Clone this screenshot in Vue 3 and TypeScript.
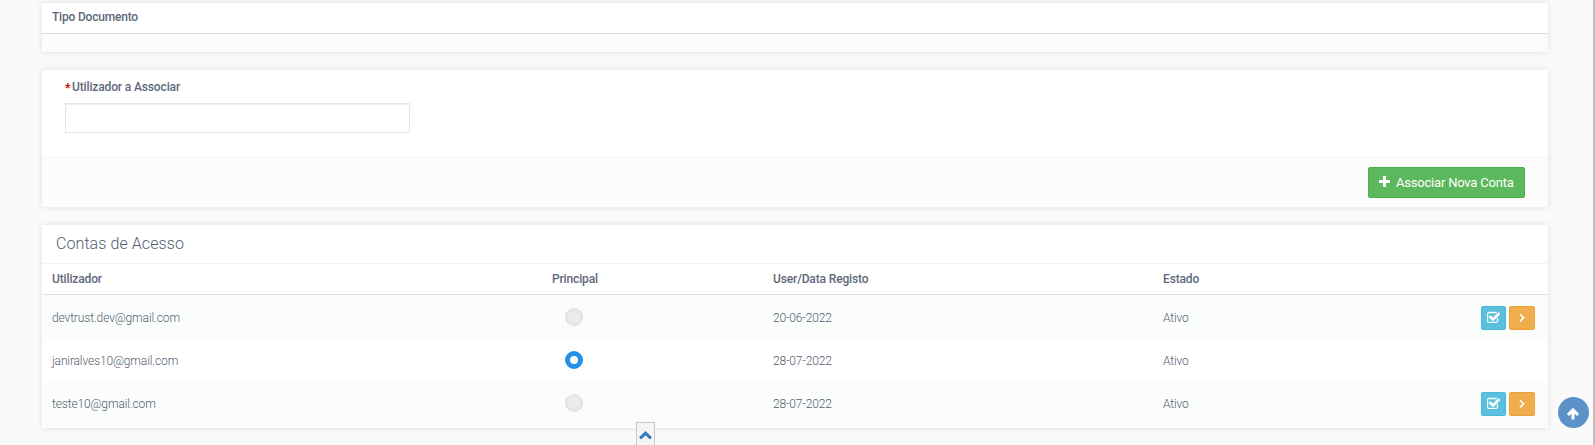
<script setup lang="ts">
interface Account {
  user: string
  date: string
  state: string
  main: boolean
}

const accounts: Account[] = [
  { user: 'devtrust.dev@gmail.com', date: '20-06-2022', state: 'Ativo', main: false },
  { user: 'janiralves10@gmail.com', date: '28-07-2022', state: 'Ativo', main: true },
  { user: 'teste10@gmail.com', date: '28-07-2022', state: 'Ativo', main: false },
]
</script>

<template>
  <div class="page">
    <section class="panel documents">
      <div class="documents-head">Tipo Documento</div>
      <div class="documents-body"></div>
    </section>

    <section class="panel associate">
      <div class="form">
        <label class="label" for="user"><span class="required">*</span>Utilizador a Associar</label>
        <input id="user" class="field" type="text" />
      </div>
      <footer class="form-footer">
        <button class="add" type="button">
          <svg class="add-icon" viewBox="0 0 1408 1408" width="11" height="11">
            <path fill="currentColor" d="M1408 608v192q0 40-28 68t-68 28H896v416q0 40-28 68t-68 28H608q-40 0-68-28t-28-68V896H96q-40 0-68-28T0 800V608q0-40 28-68t68-28h416V96q0-40 28-68t68-28h192q40 0 68 28t28 68v416h416q40 0 68 28t28 68z" />
          </svg>
          <span>Associar Nova Conta</span>
        </button>
      </footer>
    </section>

    <section class="panel accounts">
      <h2 class="title">Contas de Acesso</h2>
      <div class="row head">
        <div>Utilizador</div>
        <div>Principal</div>
        <div>User/Data Registo</div>
        <div>Estado</div>
        <div></div>
      </div>
      <div v-for="account in accounts" :key="account.user" class="row item">
        <div>{{ account.user }}</div>
        <div><span class="radio" :class="{ checked: account.main }"></span></div>
        <div>{{ account.date }}</div>
        <div>{{ account.state }}</div>
        <div class="actions">
          <template v-if="!account.main">
            <button class="action check" type="button">
              <svg viewBox="0 0 1664 1536" width="13" height="12">
                <path fill="currentColor" stroke="currentColor" stroke-width="50" d="M1408 930v318q0 119-84.500 203.500T1120 1536H288q-119 0-203.500-84.500T0 1248V416q0-119 84.500-203.500T288 128h832q63 0 117 25 15 7 18 23 3 17-9 29l-49 49q-10 10-23 10-3 0-9-2-23-6-45-6H288q-66 0-113 47t-47 113v832q0 66 47 113t113 47h832q66 0 113-47t47-113V994q0-13 9-22l64-64q10-10 23-10 6 0 12 3 20 8 20 29zm231-489l-814 814q-24 24-57 24t-57-24L281 825q-24-24-24-57t24-57l110-110q24-24 57-24t57 24l263 263 647-647q24-24 57-24t57 24l110 110q24 24 24 57t-24 57z" />
              </svg>
            </button>
            <button class="action next" type="button">
              <svg viewBox="0 0 6 10" width="6" height="10">
                <path d="M1 1.200 4.600 4.800 1 8.400" fill="none" stroke="currentColor" stroke-width="1.600" />
              </svg>
            </button>
          </template>
        </div>
      </div>
    </section>

    <button class="drawer" type="button">
      <svg viewBox="0 0 13 9" width="13" height="9">
        <path d="M1.100 7.400 6.500 2.200 11.900 7.400" fill="none" stroke="currentColor" stroke-width="3" />
      </svg>
    </button>
    <button class="top" type="button">
      <svg viewBox="0 0 12 12" width="12" height="12">
        <path d="M6 11.600V2M1 6.900 6 1.900l5 5" fill="none" stroke="currentColor" stroke-width="3" />
      </svg>
    </button>
    <div class="edge"></div>
  </div>
</template>

<style>
body {
  margin: 0;
  overflow: hidden;
}
</style>

<style scoped>
.page {
  box-sizing: border-box;
  position: relative;
  display: flex;
  flex-direction: column;
  gap: 18px;
  height: 445px;
  padding: 3px 47px 0 42px;
  overflow: hidden;
  background: #fafafa;
  color: #535d70;
  font: 12px/17px Roboto, sans-serif;
  letter-spacing: -0.14px;
}
.panel {
  box-sizing: border-box;
  flex: none;
  background: #fff;
  box-shadow: 0 0 6px rgba(0, 0, 0, 0.12);
}
.documents {
  height: 49px;
}
.documents-head {
  box-sizing: border-box;
  height: 31px;
  padding: 6px 10px 0;
  border-bottom: 1px solid #dcdedd;
  color: #5e687a;
  font-weight: 500;
  letter-spacing: -0.2px;
}
.documents-body {
  height: 18px;
  background: #fbfdfc;
}
.associate {
  height: 137px;
}
.form {
  box-sizing: border-box;
  height: 87px;
  padding: 9px 23px 0;
}
.label {
  display: flex;
  height: 17px;
  color: #5e687a;
  font-weight: 500;
  letter-spacing: -0.14px;
}
.required {
  width: 7px;
  color: #c00;
  font-weight: 700;
  transform: translateY(1px);
}
.field {
  display: block;
  box-sizing: border-box;
  width: 345px;
  height: 30px;
  margin: 7px 0 0;
  padding: 0 8px;
  border: 1px solid #e5e6e6;
  border-radius: 0;
  outline: 0;
  background: #fff;
  box-shadow: inset 0 1px 1px rgba(0, 0, 0, 0.075);
}
.form-footer {
  box-sizing: border-box;
  display: flex;
  justify-content: flex-end;
  height: 50px;
  padding: 9px 23px;
  border-top: 1px solid #f5f5f5;
  background: #fcfcfc;
}
.add {
  box-sizing: border-box;
  display: flex;
  align-items: center;
  width: 157px;
  height: 31px;
  padding: 0 0 0 10px;
  gap: 6px;
  border: 1px solid #4cae4c;
  border-radius: 2px;
  background: #5cb85c;
  color: #fff;
  font: 13px/18px Roboto, sans-serif;
  letter-spacing: -0.2px;
  white-space: nowrap;
}
.add-icon {
  margin-bottom: 2px;
}
.accounts {
  height: 203px;
}
.title {
  box-sizing: border-box;
  height: 39px;
  margin: 0;
  padding: 8px 14px;
  border-bottom: 1px solid #f3f3f3;
  font-size: 16px;
  font-weight: 300;
  line-height: 21px;
  letter-spacing: 0.08px;
}
.row {
  box-sizing: border-box;
  display: grid;
  grid-template-columns: 500px 221px 390px 260px 1fr;
  margin: 0 1px;
  padding-left: 9px;
}
.head {
  height: 31px;
  padding-top: 7px;
  border-bottom: 1px solid #dcdcde;
  color: #5e687a;
  font-weight: 500;
}
.item {
  align-items: center;
  height: 46px;
  font-weight: 300;
}
.item:nth-child(even) {
  height: 41px;
  padding-bottom: 1px;
}
.item:nth-child(odd) {
  background: #fbfdfc;
}
.item:last-child {
  height: 45px;
  padding-bottom: 1px;
}
.radio {
  display: block;
  box-sizing: border-box;
  width: 18px;
  height: 18px;
  margin: 0 0 2px 13px;
  border-radius: 50%;
  background: #ececec;
  box-shadow: inset 0 0 4px rgba(0, 0, 0, 0.1);
}
.radio.checked {
  border: 5px solid #2490ec;
  background: #fff;
  box-shadow: none;
}
.actions {
  display: flex;
  justify-content: flex-end;
  gap: 3px;
  padding-right: 12px;
}
.action {
  box-sizing: border-box;
  display: flex;
  align-items: center;
  justify-content: center;
  width: 25px;
  height: 24px;
  padding: 0 0 2px;
  border: 1px solid #46b8da;
  border-radius: 2px;
  background: #5bc0de;
  color: #fff;
}
.next {
  width: 26px;
  padding: 0;
  border-color: #eea236;
  background: #f0ad4e;
}
.drawer {
  position: absolute;
  box-sizing: border-box;
  left: 636px;
  top: 422px;
  display: flex;
  justify-content: center;
  width: 19px;
  height: 30px;
  padding: 8px 0 0;
  border: 1px solid #c8c8c8;
  background: #f5f5f5;
  color: #337ab7;
}
.top {
  position: absolute;
  left: 1558px;
  top: 397px;
  display: flex;
  align-items: center;
  justify-content: center;
  width: 31px;
  height: 31px;
  padding: 2px 1px 0 0;
  box-sizing: border-box;
  border: 0;
  border-radius: 50%;
  background: #5b92c8;
  color: #fff;
}
.edge {
  position: absolute;
  top: 0;
  right: 0;
  width: 2px;
  height: 100%;
  background: #c1c1c1;
}
</style>
